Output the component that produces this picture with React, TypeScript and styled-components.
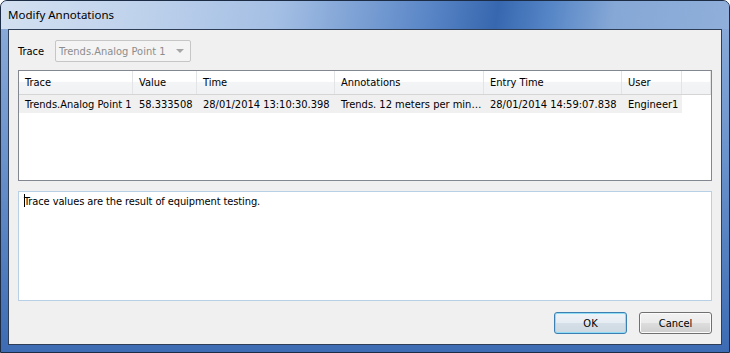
import styled, { createGlobalStyle } from "styled-components";

const GlobalStyle = createGlobalStyle`
  html, body {
    margin: 0;
    padding: 0;
    background: #ffffff;
  }
  #root {
    width: 730px;
    height: 353px;
  }
`;

const uiFont = `"DejaVu Sans Condensed", "DejaVu Sans", "Liberation Sans", sans-serif`;

const Window = styled.div`
  width: 730px;
  height: 353px;
  box-sizing: border-box;
  display: flex;
  flex-direction: column;
  border: 1px solid #1c2c44;
  border-radius: 7px 7px 0 0;
  background: linear-gradient(180deg, #8eaedb 0%, #6a92cb 45%, #3d6cb4 100%);
  padding: 0 7px 7px 7px;
  overflow: hidden;
`;

const TitleBar = styled.div`
  height: 28px;
  margin: 0 -7px;
  padding-left: 7px;
  display: flex;
  align-items: center;
  padding-bottom: 1px;
  box-sizing: border-box;
  font-family: "Noto Sans", "Open Sans", sans-serif;
  font-size: 11.5px;
  color: #000;
  background: linear-gradient(
    100deg,
    #d3e0f1 0%,
    #c0d3ec 18%,
    #a4bfe4 38%,
    #5c88c8 58%,
    #3767af 68%,
    #5585c6 75%,
    #86a8d6 84%,
    #90afda 100%
  );
`;

const Client = styled.div`
  flex: 1;
  display: flex;
  flex-direction: column;
  background: #f0f0f0;
  border: 1px solid #2d3e56;
  padding: 10px 9px 10px 9px;
  font-family: ${uiFont};
  font-size: 11px;
  color: #000;
`;

const TraceRow = styled.div`
  display: flex;
  align-items: center;
  gap: 11px;
  height: 22px;
`;

const Label = styled.span`
  width: 26px;
`;

const Combo = styled.div`
  width: 136px;
  height: 22px;
  box-sizing: border-box;
  border: 1px solid #c6c6c6;
  border-radius: 2px;
  background: #f4f4f4;
  color: #8d8d8d;
  display: flex;
  align-items: center;
  justify-content: space-between;
  padding: 0 6px 0 3px;
`;

const Arrow = styled.span`
  width: 0;
  height: 0;
  border-left: 4px solid transparent;
  border-right: 4px solid transparent;
  border-top: 4px solid #a6a6a6;
`;

const Table = styled.div`
  margin-top: 8px;
  height: 111px;
  box-sizing: border-box;
  border: 1px solid #828790;
  background: #ffffff;
  display: flex;
  flex-direction: column;
`;

const cols = "114px 64px 138px 149px 138px 60px 1fr";

const HeaderRow = styled.div`
  display: grid;
  grid-template-columns: ${cols};
  height: 23px;
  background: linear-gradient(180deg, #ffffff 0%, #ffffff 45%, #f3f4f6 50%, #f1f2f4 100%);
  border-bottom: 1px solid #d5d5d5;
`;

const HeaderCell = styled.div`
  display: flex;
  align-items: center;
  padding-left: 6px;
  border-right: 1px solid #e3e4e6;
  white-space: nowrap;
  overflow: hidden;
`;

const DataRow = styled.div`
  display: grid;
  grid-template-columns: ${cols};
  height: 18px;
`;

const DataCell = styled.div<{ $filler?: boolean }>`
  display: flex;
  align-items: center;
  padding-left: 6px;
  background: ${(p) => (p.$filler ? "transparent" : "#f0f0f0")};
  white-space: nowrap;
  overflow: hidden;
`;

const NoteBox = styled.div`
  margin-top: 10px;
  height: 110px;
  box-sizing: border-box;
  border: 1px solid #b8d0e6;
  background: #ffffff;
  padding: 2px 5px;
  line-height: 14px;
  letter-spacing: -0.1px;
`;

const Caret = styled.span`
  display: inline-block;
  width: 1px;
  height: 13px;
  background: #000;
  vertical-align: -2px;
  margin-right: -1px;
`;

const Buttons = styled.div`
  margin-top: auto;
  display: flex;
  justify-content: flex-end;
  gap: 12px;
`;

const Button = styled.div<{ $focused?: boolean }>`
  width: 73px;
  height: 22px;
  box-sizing: border-box;
  border-radius: 3px;
  border: 1px solid ${(p) => (p.$focused ? "#3c7fb1" : "#707070")};
  box-shadow: inset 0 0 0 1px ${(p) => (p.$focused ? "#8fdcf6" : "#fbfbfb")};
  background: ${(p) =>
    p.$focused
      ? "linear-gradient(180deg, #eef3f7 0%, #e6edf2 50%, #d5dfe7 52%, #cdd8e1 100%)"
      : "linear-gradient(180deg, #f2f2f2 0%, #ebebeb 50%, #dddddd 52%, #cfcfcf 100%)"};
  display: flex;
  align-items: center;
  justify-content: center;
`;

const columns = ["Trace", "Value", "Time", "Annotations", "Entry Time", "User"];
const row = [
  "Trends.Analog Point 1",
  "58.333508",
  "28/01/2014 13:10:30.398",
  "Trends. 12 meters per min…",
  "28/01/2014 14:59:07.838",
  "Engineer1",
];

export default function App() {
  return (
    <>
      <GlobalStyle />
      <Window>
        <TitleBar>Modify Annotations</TitleBar>
        <Client>
          <TraceRow>
            <Label>Trace</Label>
            <Combo>
              <span>Trends.Analog Point 1</span>
              <Arrow />
            </Combo>
          </TraceRow>
          <Table>
            <HeaderRow>
              {columns.map((c) => (
                <HeaderCell key={c}>{c}</HeaderCell>
              ))}
              <HeaderCell />
            </HeaderRow>
            <DataRow>
              {row.map((v, i) => (
                <DataCell key={i}>{v}</DataCell>
              ))}
              <DataCell $filler />
            </DataRow>
          </Table>
          <NoteBox>
            <Caret />
            Trace values are the result of equipment testing.
          </NoteBox>
          <Buttons>
            <Button $focused>OK</Button>
            <Button>Cancel</Button>
          </Buttons>
        </Client>
      </Window>
    </>
  );
}
